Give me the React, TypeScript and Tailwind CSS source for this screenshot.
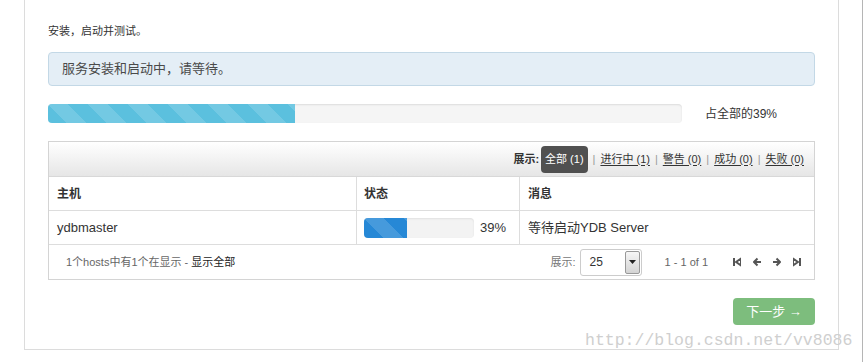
const FONT = "font-['Liberation_Sans','Noto_Sans_CJK_SC',sans-serif]";

const STRIPES =
  "bg-[linear-gradient(45deg,rgba(255,255,255,0.15)_25%,transparent_25%,transparent_50%,rgba(255,255,255,0.15)_50%,rgba(255,255,255,0.15)_75%,transparent_75%,transparent)] bg-[length:40px_40px]";

export default function App() {
  return (
    <div className={`relative flex h-[362px] w-[866px] overflow-hidden bg-white text-[#333] ${FONT}`}>
      <main className="ml-[24px] flex h-[350px] w-[815px] flex-col border-x border-b border-[#dcdcdc] px-[23px] pt-[23px]">
        <p className="text-[11px] leading-4">安装，启动并测试。</p>

        <div className="mt-[13px] flex h-[34px] items-center rounded-[4px] border border-[#c3d8e6] bg-[#e4eef6] px-[13px] text-[13px] text-[#4a4a4a]">
          服务安装和启动中，请等待。
        </div>

        <div className="mt-[18px] flex h-[19px] items-center">
          <div className="h-[19px] w-[634px] overflow-hidden rounded-[4px] bg-[#f5f5f5] shadow-[inset_0_1px_2px_rgba(0,0,0,0.1)]">
            <div className={`h-full w-[39%] bg-[#5bc0de] ${STRIPES}`} />
          </div>
          <span className="ml-[23px] text-[12px]">占全部的39%</span>
        </div>

        <HostTable />

        <div className="mt-[18px] flex justify-end">
          <button className="h-[27px] w-[82px] rounded-[4px] bg-[#7dbd7d] text-[13px] text-white">
            下一步 →
          </button>
        </div>
      </main>
      <div className="ml-[23px] h-full border-l border-[#b5b5b5]" />

      <span className="absolute left-[585px] top-[331px] font-['Liberation_Mono',monospace] text-[16.5px] leading-5 text-[#cfcfcf]">
        http://blog.csdn.net/vv8086
      </span>
    </div>
  );
}

function HostTable() {
  return (
    <section className="mt-[18px] border border-[#d4d4d4]">
      <div className="flex h-[35px] items-center justify-end border-b border-[#d8d8d8] bg-[linear-gradient(#ffffff,#e6e6e6)] pr-[10px] text-[11px]">
        <span className="mr-[2px] font-bold">展示:</span>
        <span className="flex h-[27px] items-center rounded-[4px] bg-[#505050] px-[4px] text-white">全部 (1)</span>
        <Filter label="进行中 (1)" />
        <Filter label="警告 (0)" />
        <Filter label="成功 (0)" />
        <Filter label="失败 (0)" />
      </div>

      <div className="grid grid-cols-[307px_163px_1fr]">
        <div className="flex h-[34px] items-center border-b border-[#dddddd] pl-[8px] text-[12px] font-bold">主机</div>
        <div className="flex h-[34px] items-center border-b border-l border-[#dddddd] pl-[7px] text-[12px] font-bold">状态</div>
        <div className="flex h-[34px] items-center border-b border-l border-[#dddddd] pl-[8px] text-[12px] font-bold">消息</div>

        <div className="flex h-[34px] items-center border-b border-[#dddddd] pl-[8px] text-[13px]">ydbmaster</div>
        <div className="flex h-[34px] items-center border-b border-l border-[#dddddd] pl-[7px] text-[13px]">
          <div className="h-[20px] w-[110px] overflow-hidden rounded-[4px] bg-[#f3f3f3] shadow-[inset_0_1px_2px_rgba(0,0,0,0.08)]">
            <div className={`h-full w-[39%] bg-[#2688d6] ${STRIPES}`} />
          </div>
          <span className="ml-[6px]">39%</span>
        </div>
        <div className="flex h-[34px] items-center border-b border-l border-[#dddddd] pl-[8px] text-[13px]">
          等待启动YDB Server
        </div>
      </div>

      <div className="flex h-[34px] items-center pl-[17px] pr-[13px] text-[11px]">
        <span className="text-[#666]">
          1个hosts中有1个在显示 - <span className="text-[#222]">显示全部</span>
        </span>
        <span className="ml-auto text-[#777]">展示:</span>
        <div className="ml-[4px] flex h-[27px] w-[62px] overflow-hidden rounded-[3px] border border-[#cccccc] bg-white">
          <span className="flex flex-1 items-center pl-[9px] text-[12px]">25</span>
          <span className="my-[1px] mr-[1px] flex w-[15px] items-center justify-center rounded-[2px] border border-[#999] bg-[linear-gradient(#f6f6f6,#d4d4d4)]">
            <svg width="7" height="4" viewBox="0 0 7 4">
              <path d="M0 0h7L3.5 4z" fill="#222" />
            </svg>
          </span>
        </div>
        <span className="ml-[23px] text-[#666]">1 - 1 of 1</span>
        <div className="ml-[25px] flex items-center gap-[12px] text-[#555]">
          <Icon d="M1 1v8M8 1.5L3 5l5 3.5z" />
          <Icon d="M8 5H1.5M4.5 1.5L1 5l3.5 3.5" />
          <Icon d="M0 5h6.5M3.5 1.5L7 5 3.5 8.5" />
          <Icon d="M7 1v8M0 1.5L5 5 0 8.5z" />
        </div>
      </div>
    </section>
  );
}

function Filter({ label }: { label: string }) {
  return (
    <>
      <span className="mx-[5px] text-[#999]">|</span>
      <span className="underline underline-offset-2">{label}</span>
    </>
  );
}

function Icon({ d }: { d: string }) {
  return (
    <svg width="8" height="10" viewBox="0 0 8 10" fill="none">
      <path d={d} stroke="#555" strokeWidth="2" strokeLinejoin="round" fill="none" />
    </svg>
  );
}
